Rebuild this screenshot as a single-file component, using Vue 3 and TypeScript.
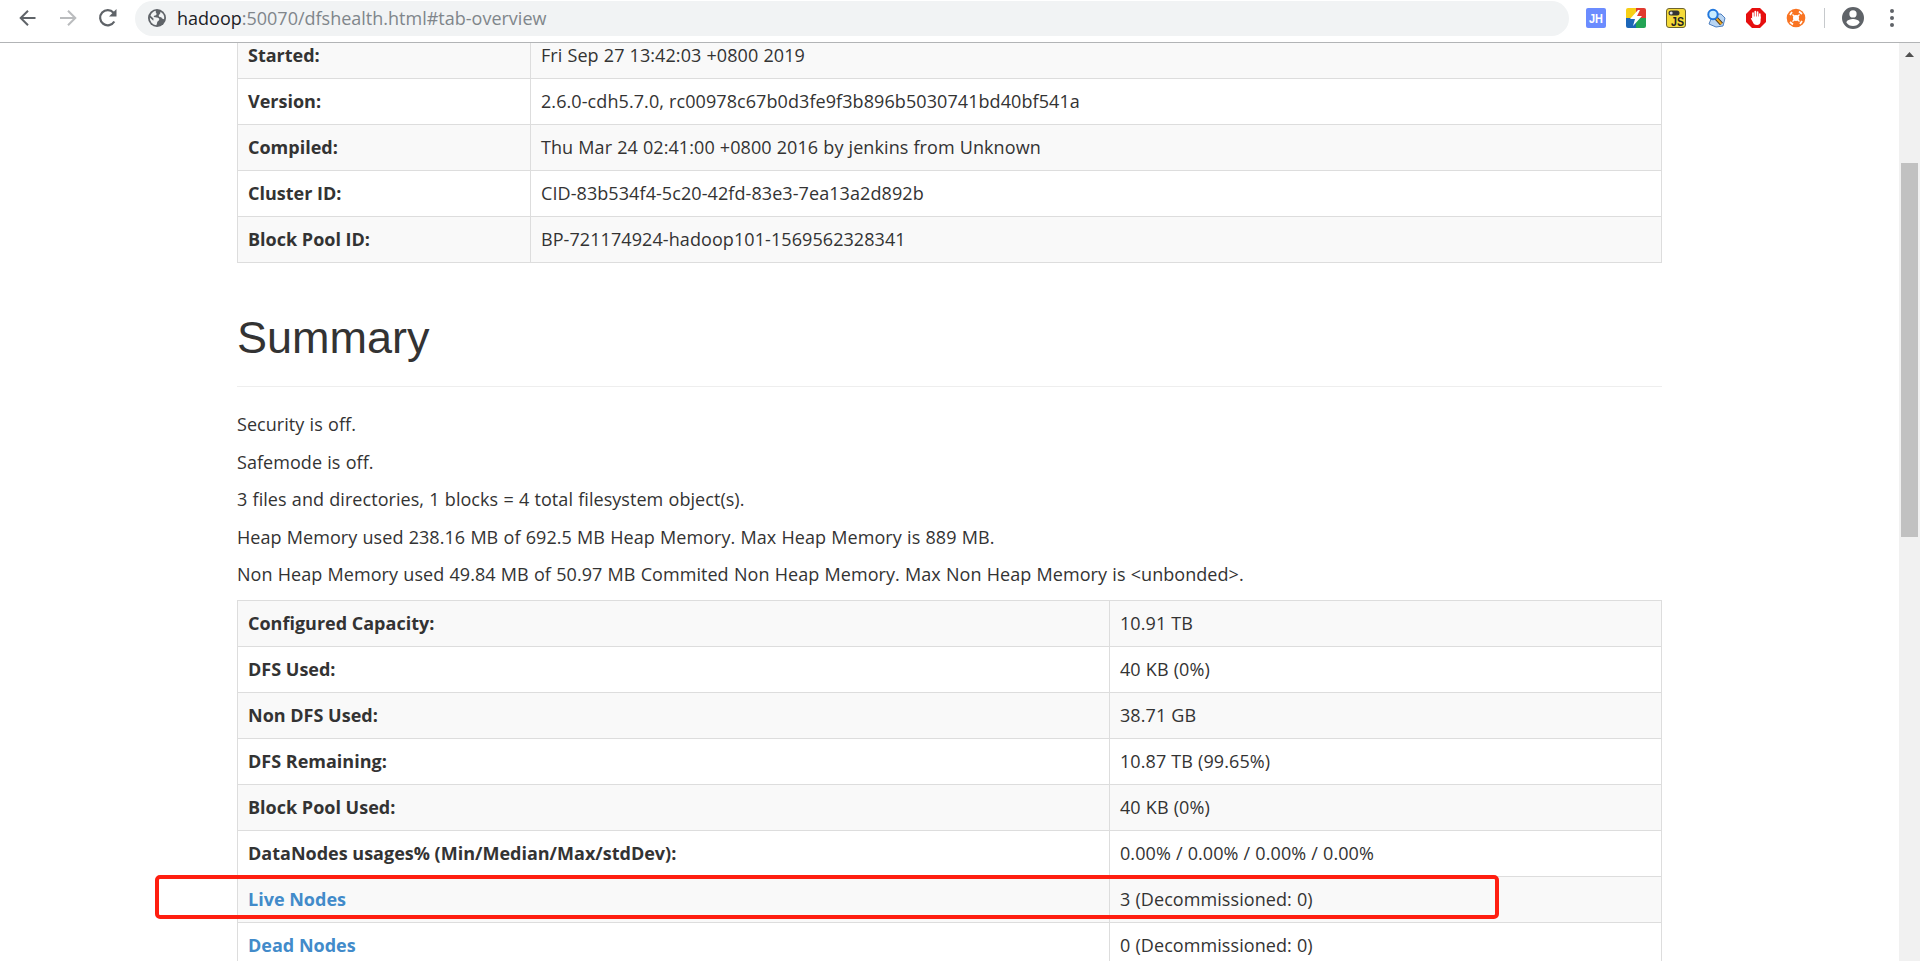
<script setup lang="ts">
interface Row { label: string; value: string; link?: boolean }

const overview: Row[] = [
  { label: 'Started:', value: 'Fri Sep 27 13:42:03 +0800 2019' },
  { label: 'Version:', value: '2.6.0-cdh5.7.0, rc00978c67b0d3fe9f3b896b5030741bd40bf541a' },
  { label: 'Compiled:', value: 'Thu Mar 24 02:41:00 +0800 2016 by jenkins from Unknown' },
  { label: 'Cluster ID:', value: 'CID-83b534f4-5c20-42fd-83e3-7ea13a2d892b' },
  { label: 'Block Pool ID:', value: 'BP-721174924-hadoop101-1569562328341' },
]

const notes: string[] = [
  'Security is off.',
  'Safemode is off.',
  '3 files and directories, 1 blocks = 4 total filesystem object(s).',
  'Heap Memory used 238.16 MB of 692.5 MB Heap Memory. Max Heap Memory is 889 MB.',
  'Non Heap Memory used 49.84 MB of 50.97 MB Commited Non Heap Memory. Max Non Heap Memory is <unbonded>.',
]

const summary: Row[] = [
  { label: 'Configured Capacity:', value: '10.91 TB' },
  { label: 'DFS Used:', value: '40 KB (0%)' },
  { label: 'Non DFS Used:', value: '38.71 GB' },
  { label: 'DFS Remaining:', value: '10.87 TB (99.65%)' },
  { label: 'Block Pool Used:', value: '40 KB (0%)' },
  { label: 'DataNodes usages% (Min/Median/Max/stdDev):', value: '0.00% / 0.00% / 0.00% / 0.00%' },
  { label: 'Live Nodes', value: '3 (Decommissioned: 0)', link: true },
  { label: 'Dead Nodes', value: '0 (Decommissioned: 0)', link: true },
]
</script>

<template>
  <div class="browser">
    <header class="toolbar">
      <nav class="nav">
        <svg width="20" height="20" viewBox="0 0 20 20" fill="none" stroke="#5f6368" stroke-width="2"><path d="M17.500 10H3M10 2.700 2.700 10l7.300 7.300" /></svg>
        <svg width="20" height="20" viewBox="0 0 20 20" fill="none" stroke="#babcbe" stroke-width="2"><path d="M2 10h15M10 2.700 17.300 10 10 17.300" /></svg>
        <svg width="20" height="20" viewBox="0 0 20 20" fill="none" stroke="#5f6368" stroke-width="2.200"><path d="M16.300 13.500A7.600 7.600 0 1 1 15.500 4.700L17 6.300" /><path d="M18.500 1v7.500H11z" fill="#5f6368" stroke="none" /></svg>
      </nav>
      <div class="omnibox">
        <svg width="20" height="20" viewBox="0 0 20 20"><circle cx="10" cy="10" r="9" fill="#5f6368" /><path d="M9 2.800c-1 2 1 2.200.5 3.600-.4 1.200-2.500.7-2.800 2-.2 1 3.500.7 4.700 1.500 1.500 1 .8 2.600-.3 3.200-1.300.7-.8 2.500-1.800 4.100A7.200 7.200 0 0 1 2.800 9.500l3.500 3.300.2-2.300-3-2.800A7.200 7.200 0 0 1 9 2.800zM13.500 3.700a7.200 7.200 0 0 1 3.600 7.400c-1.500.2-2.600-.8-3-2-1.700.3-2.600-.7-2.300-1.800.3-1 1.700-1.200 1.700-3.600z" fill="#f1f3f4" /></svg>
        <span class="url"><b>hadoop</b>:50070/dfshealth.html#tab-overview</span>
      </div>
      <div class="extensions">
        <svg width="20" height="20" viewBox="0 0 20 20"><rect width="20" height="20" rx="2" fill="#6b8cff" /><text x="10" y="14.500" text-anchor="middle" textLength="14" lengthAdjust="spacingAndGlyphs" class="jh">JH</text></svg>
        <svg width="20" height="20" viewBox="0 0 20 20"><path d="M2 0h8v10H0V2a2 2 0 0 1 2-2z" fill="#f7cf16" /><path d="M10 0h8a2 2 0 0 1 2 2v8H10z" fill="#e03a2f" /><path d="M0 10h10v10H2a2 2 0 0 1-2-2z" fill="#1c66b8" /><path d="M10 10h10v8a2 2 0 0 1-2 2h-8z" fill="#23a455" /><path d="M12 2 4 11h5l-2 7 9-10h-5l3-6z" fill="#fff" /></svg>
        <svg width="20" height="20" viewBox="0 0 20 20"><rect x=".5" y=".5" width="19" height="19" rx="2.500" fill="#f5da38" stroke="#6d6430" /><rect x="2.500" y="2.500" width="11" height="5" rx="2.500" fill="#333" /><circle cx="5.200" cy="5" r="1.500" fill="#ddd" /><text x="11.500" y="18" text-anchor="middle" textLength="13" lengthAdjust="spacingAndGlyphs" class="js">JS</text></svg>
        <svg width="20" height="20" viewBox="0 0 20 20"><path d="M7 6h8l4 4-2 8-7 1-7-3z" fill="#b9d5f2" stroke="#4d7fc0" /><path d="m10 10 5.500 6" stroke="#3b3120" stroke-width="4" /><path d="m10 10 5.500 6" stroke="#f0a820" stroke-width="2" /><circle cx="7" cy="6.500" r="4.700" fill="#c9edff" stroke="#2378dd" stroke-width="2" /></svg>
        <svg width="20" height="20" viewBox="0 0 20 20"><path d="M6 0h8l6 6v8l-6 6H6l-6-6V6z" fill="#e60f0f" /><path d="M7 9V5M9.300 9V3.500M11.600 9V4M13.800 10V6" stroke="#fff" stroke-width="1.700" stroke-linecap="round" /><path d="M6.200 8.500h8.400V13c0 2.500-1.500 4-3.500 4-2.500 0-3.700-1.300-4.300-3l-2-3.500c.6-.8 1.100-.4 1.400 0z" fill="#fff" /></svg>
        <svg width="20" height="20" viewBox="0 0 20 20"><circle cx="10" cy="10" r="9.300" fill="#f97422" /><circle cx="10" cy="10" r="3" fill="#fff" /><path d="m6.500 6.500 7 7M13.500 6.500l-7 7" stroke="#fff" stroke-width="1.300" /><path d="M4 7l2-3M13 3.500 16 6M16 13l-2 3M7 16.500 4 14" stroke="#fff" stroke-width="1.700" /></svg>
      </div>
      <span class="divider"></span>
      <svg class="avatar" width="22" height="22" viewBox="2 2 20 20"><path fill="#5f6368" d="M12 2a10 10 0 1 0 0 20 10 10 0 0 0 0-20zm0 3a3.300 3.300 0 1 1 0 6.600A3.300 3.300 0 0 1 12 5zm0 14.200a7.200 7.200 0 0 1-6-3.200c0-2 4-3.100 6-3.100s6 1.100 6 3.100a7.200 7.200 0 0 1-6 3.200z" /></svg>
      <svg class="more" width="4" height="18" viewBox="0 0 4 18" fill="#5f6368"><circle cx="2" cy="2" r="2" /><circle cx="2" cy="9" r="2" /><circle cx="2" cy="16" r="2" /></svg>
    </header>

    <div class="viewport">
      <main class="page">
        <table class="grid overview">
          <tbody>
            <tr v-for="row in overview" :key="row.label"><th><span>{{ row.label }}</span></th><td>{{ row.value }}</td></tr>
          </tbody>
        </table>
        <h1>Summary</h1>
        <p v-for="note in notes" :key="note">{{ note }}</p>
        <table class="grid summary">
          <tbody>
            <tr v-for="row in summary" :key="row.label">
              <th><a v-if="row.link">{{ row.label }}</a><span v-else>{{ row.label }}</span></th>
              <td>{{ row.value }}</td>
            </tr>
          </tbody>
        </table>
      </main>
      <aside class="scrollbar">
        <svg width="9" height="5" viewBox="0 0 9 5"><path d="M0 5 4.500 0 9 5z" fill="#505050" /></svg>
        <i class="thumb"></i>
      </aside>
    </div>
    <div class="highlight"></div>
  </div>
</template>

<style>
html, body { margin: 0; overflow: hidden; }
</style>

<style scoped>
.browser { position: relative; display: flex; flex-direction: column; height: 961px; overflow: hidden; background: #fff; color: #333; font-family: "Open Sans", "Noto Sans", sans-serif; font-size: 18px; line-height: 25px; }
.browser * { box-sizing: border-box; }
.toolbar { flex: none; display: flex; align-items: center; height: 43px; padding: 0 20px 6px 18px; border-bottom: 1px solid #b2b4b6; }
svg { display: block; flex: none; }
.nav { display: flex; gap: 20px; width: 117px; }
.omnibox { display: flex; align-items: center; gap: 10px; width: 1434px; height: 35px; padding-left: 12px; border-radius: 18px; background: #f1f3f4; }
.url { color: #80868b; font-size: 18px; white-space: pre; }
.url b { color: #202124; font-weight: 400; }
.extensions { display: flex; gap: 20px; margin-left: 17px; }
.jh { font: 700 12px "Liberation Sans", sans-serif; fill: #fff; }
.js { font: 700 13px "Liberation Sans", sans-serif; fill: #222; }
.divider { width: 1px; height: 20px; margin-left: 18px; background: #c6c9cc; }
.avatar { margin-left: 17px; }
.more { margin-left: auto; margin-right: 6px; }
.viewport { flex: 1; display: flex; min-height: 0; overflow: hidden; }
.page { flex: 1; padding: 0 237px; margin-top: -11px; }
.grid { width: 1425px; table-layout: fixed; border-collapse: collapse; }
.grid tr { height: 46px; }
.grid tr:nth-child(odd) { background: #f9f9f9; }
.grid th, .grid td { padding: 10px; border: 1px solid #ddd; text-align: left; vertical-align: top; white-space: nowrap; line-height: 25px; }
.grid th { font-weight: 700; letter-spacing: 0; }
.grid td { letter-spacing: 0.08px; word-spacing: 0.3px; }
.overview th { width: 293px; }
.summary th { width: 872px; }
a { color: #428bca; }
h1 { margin: 50px 0 25.5px; padding-bottom: 23px; border-bottom: 1px solid #eee; font: 400 45px/49.5px "Liberation Sans", Arial, sans-serif; }
p { margin: 0 0 12.5px; letter-spacing: 0.05px; word-spacing: 0.5px; white-space: nowrap; }
.scrollbar { display: flex; flex-direction: column; align-items: center; width: 21px; padding-top: 9px; background: #f1f1f1; }
.thumb { width: 17px; height: 374px; margin-top: 106px; background: #c1c1c1; }
.highlight { position: absolute; left: 155px; top: 875px; width: 1344px; height: 44px; border: 4px solid #ff1e10; border-radius: 5px; }
</style>
